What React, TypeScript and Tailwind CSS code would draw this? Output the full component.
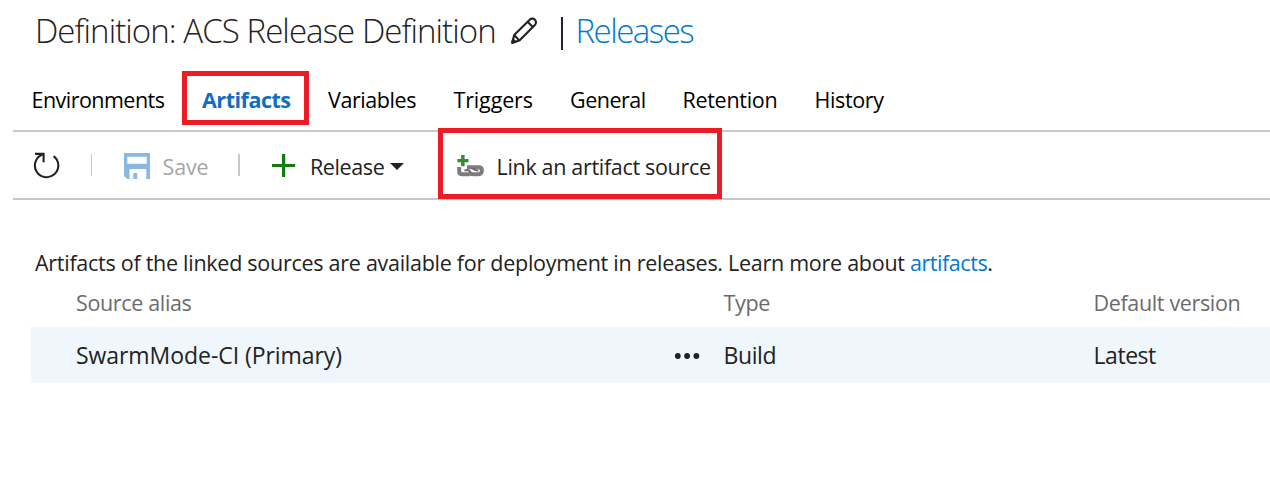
function PencilIcon() {
  return (
    <svg className="ml-[14px] mt-[3px] h-7 w-7 shrink-0" viewBox="0 0 28 28" fill="none" stroke="#222" strokeWidth="2.1" strokeLinejoin="round">
      <path d="M2.2 25.8 4.2 18 19.7 2.7a3.6 3.6 0 0 1 5.2 0 3.6 3.6 0 0 1 0 5.2L9.4 23.6Z" />
      <path d="M17.6 4.8 22.8 10M4.2 18 9.4 23.6" />
      <path d="M2.2 25.8 3 22.4 5.4 25Z" fill="#222" />
    </svg>
  );
}

function RefreshIcon() {
  return (
    <svg className="mt-[2px] h-7 w-7" viewBox="0 0 28 28" fill="none" stroke="#222" strokeWidth="2.1">
      <path d="M20.6 4.1A11.7 11.7 0 1 1 10.2 2.3" />
      <path d="M2 1.9H10.6V10.2" />
    </svg>
  );
}

function SaveIcon() {
  return (
    <svg className="h-[26px] w-[26px]" viewBox="0 0 26 26" fill="#8ab8e1">
      <path
        fillRule="evenodd"
        d="M0 0H26V26H22.3V16H5.5V26H3.3L0 23ZM3.3 3.7V10.8H22.7V3.7ZM9.3 20H13.2V26H9.3Z"
      />
    </svg>
  );
}

function LinkIcon() {
  return (
    <svg className="h-[22px] w-[27px]" viewBox="0 0 27 22" fill="none">
      <path d="M2.2 12v4.4q0 2.8 3 2.8h7.5" stroke="#7c7c7c" strokeWidth="4" />
      <path d="M10 12.2h11.5q3.4 0 3.4 3.4t-3.4 3.6h-5.5q-3.2 0-3.8-2" stroke="#7c7c7c" strokeWidth="4" />
      <path d="M7.5 15.6q4.5-1.6 6.3 1.8M15.5 13q2 2.6 5.8 2.6" stroke="#666" strokeWidth="2" />
      <path d="M4.1 0h3.5v3.9h3.9v3.4H7.6v3.9H4.1V7.3H.4V3.9h3.7Z" fill="#388a38" stroke="#fff" strokeWidth="2" paintOrder="stroke" />
    </svg>
  );
}

const tabs = [
  { label: "Environments", cls: "w-[170.5px] tracking-[-0.53px] text-black" },
  { label: "Artifacts", cls: "w-[126px] tracking-[-0.48px] font-bold text-[#106ebe]", active: true },
  { label: "Variables", cls: "w-[125.5px] tracking-[-0.42px] text-black" },
  { label: "Triggers", cls: "w-[116.5px] tracking-[-0.15px] text-black" },
  { label: "General", cls: "w-[112.5px] tracking-[-0.5px] text-black" },
  { label: "Retention", cls: "w-[132px] tracking-[-0.3px] text-black" },
  { label: "History", cls: "w-[90px] tracking-[-0.35px] text-black" },
];

export default function App() {
  return (
    <main className="h-[481px] w-[1270px] overflow-hidden bg-white font-['Open_Sans',sans-serif] text-[21.5px] leading-[30px] whitespace-pre text-[#222]">
      <header className="flex h-[58px] items-center pl-[35px] text-[33px] font-light">
        <h1 className="mt-[3px] w-[461px] tracking-[-0.93px]">Definition: ACS Release Definition</h1>
        <PencilIcon />
        <span className="mt-[9px] ml-[23px] h-[33px] w-[1.5px] bg-[#223]" />
        <a className="mt-[3px] ml-[13px] tracking-[-1.5px] text-[#0078d7]">Releases</a>
      </header>

      <nav className="flex h-[72px] items-center pt-3 pl-[31.5px]">
        {tabs.map((t) => (
          <a key={t.label} className={`relative shrink-0 ${t.cls}`}>
            {t.label}
            {t.active && (
              <span className="absolute top-[-14px] left-[-20px] h-[54px] w-[127px] border-5 border-[#ed1c24]" />
            )}
          </a>
        ))}
      </nav>

      <div className="ml-[13px] flex h-[70px] items-center border-y-2 border-[#c8c8c8] pl-5">
        <RefreshIcon />
        <span className="ml-[30px] h-[22px] w-px bg-[#c8c8c8]" />
        <span className="ml-8 mt-[2px]">
          <SaveIcon />
        </span>
        <span className="ml-[12.5px] mt-[3px] w-[75.5px] tracking-[-0.15px] text-[#a6a6a6]">Save</span>
        <span className="h-[22px] w-[2px] bg-[#c8c8c8]" />
        <svg className="ml-[32px] mt-px h-[23px] w-[23px]" viewBox="0 0 23 23" fill="#107c10">
          <path d="M10 0h3.2v10h10v3h-10v10H10V13H0v-3h10Z" />
        </svg>
        <span className="ml-[15px] mt-[3px] w-[80px] tracking-[-0.4px]">Release</span>
        <svg className="mt-[2px] h-[7px] w-[14px]" viewBox="0 0 14 7" fill="#222">
          <path d="M0 0h14L7 7Z" />
        </svg>
        <div className="relative -mt-[3px] ml-[34px] flex h-[71px] w-[284px] shrink-0 items-center border-5 border-[#ed1c24] pl-[14px]">
          <span className="mt-[4px]">
            <LinkIcon />
          </span>
          <span className="ml-[12.5px] mt-[6px] tracking-[-0.32px]">Link an artifact source</span>
        </div>
      </div>

      <p className="mt-[48px] pl-[35px] tracking-[-0.27px]">
        Artifacts of the linked sources are available for deployment in releases. Learn more about <a className="tracking-[-0.45px] text-[#0078d7]">artifacts</a>.
      </p>

      <section className="ml-[31px]">
        <div className="grid h-[49px] grid-cols-[647.5px_370px_1fr] pt-[10px] pl-[45px] tracking-[-0.35px] text-[#6b6b6b]">
          <span>Source alias</span>
          <span>Type</span>
          <span>Default version</span>
        </div>
        <div className="grid h-[56px] grid-cols-[598px_49.5px_370px_1fr] items-center bg-[#eff6fc] pl-[45px] text-[23px]">
          <span className="tracking-[-0.06px]">SwarmMode-CI (Primary)</span>
          <svg className="mt-[2px] h-[6px] w-[26px]" viewBox="0 0 26 6" fill="#222">
            <circle cx="3.8" cy="3" r="2.9" />
            <circle cx="13.1" cy="3" r="2.9" />
            <circle cx="22.4" cy="3" r="2.9" />
          </svg>
          <span className="tracking-[-0.4px]">Build</span>
          <span className="tracking-[-0.45px]">Latest</span>
        </div>
      </section>
    </main>
  );
}
